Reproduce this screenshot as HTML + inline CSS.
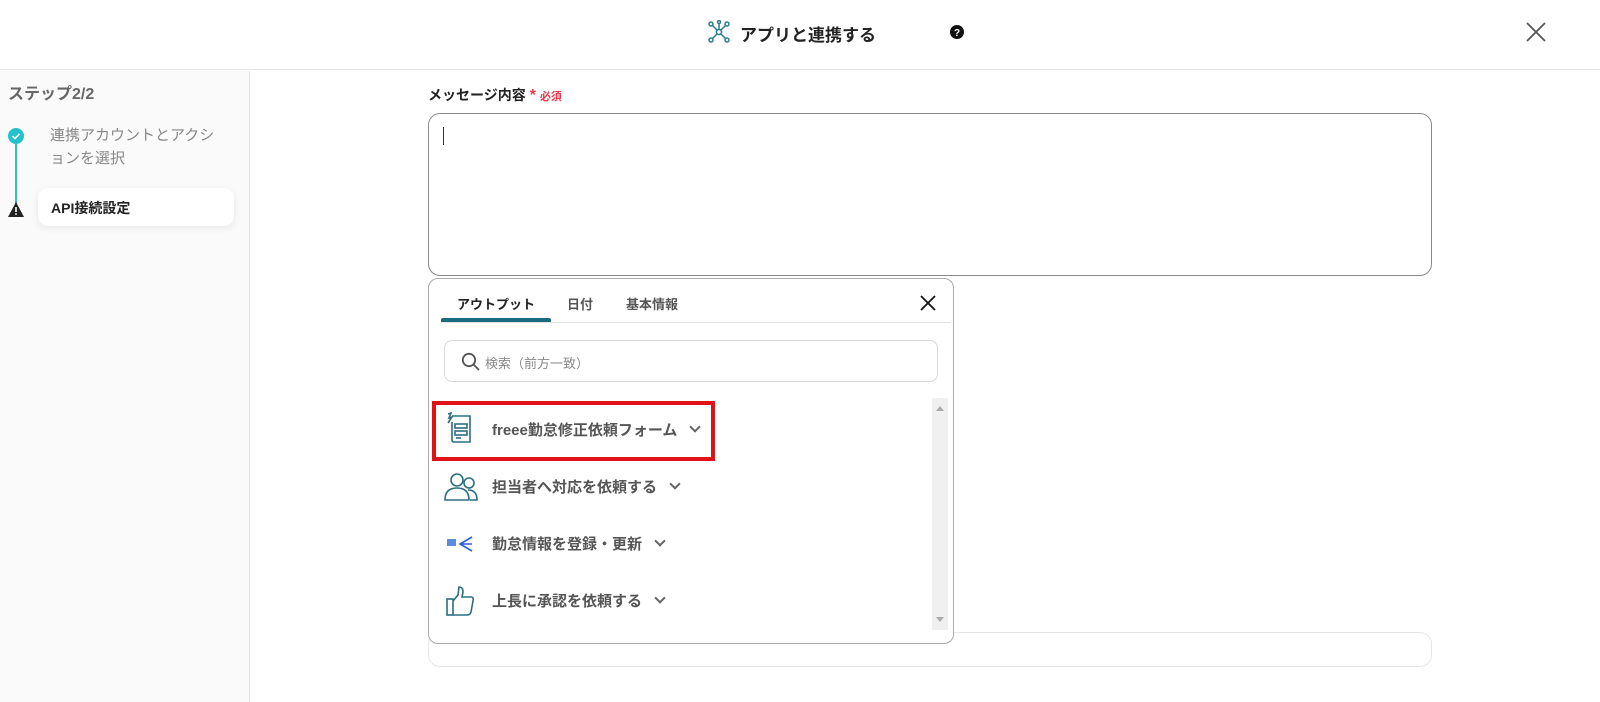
<!DOCTYPE html>
<html><head><meta charset="utf-8"><style>
*{margin:0;padding:0;box-sizing:border-box}
body{width:1600px;height:702px;overflow:hidden;background:#fff;font-family:"Liberation Sans","Noto Sans CJK JP",sans-serif;position:relative;color:#222}
.a{position:absolute}
.hdr{left:0;top:0;width:1600px;height:70px;border-bottom:1px solid #e6e6e6;background:#fff}
.side{left:0;top:71px;width:250px;height:631px;background:#fafafa;border-right:1px solid #e6e6e6}
.item{left:492px;font-size:15px;font-weight:bold;color:#555;white-space:nowrap;line-height:20px}
.chev{display:inline-block;width:8px;height:8px;border-right:2px solid #666;border-bottom:2px solid #666;transform:rotate(45deg);margin-left:14px;position:relative;top:-4px}
</style></head><body>
<div class="a hdr"></div>
<svg class="a" style="left:707px;top:20px" width="24" height="24" viewBox="0 0 24 24" fill="none" stroke="#2b7d92" stroke-width="1.5"><circle cx="12" cy="12" r="2.5"/><circle cx="4" cy="4" r="2"/><circle cx="20" cy="4" r="2"/><circle cx="4" cy="20" r="2"/><circle cx="20" cy="20" r="2"/><circle cx="12" cy="2" r="1.5"/><path d="M5.5 5.5L10 10M18.5 5.5L14 10M5.5 18.5L10 14M18.5 18.5L14 14M12 3.5V9.5"/></svg>
<div class="a" style="left:740px;top:21px;font-size:17px;font-weight:bold;color:#222">アプリと連携する</div>
<svg class="a" style="left:950px;top:25px" width="14" height="14" viewBox="0 0 14 14"><circle cx="7" cy="7" r="7" fill="#111"/><text x="7" y="11" text-anchor="middle" font-size="10" font-weight="bold" fill="#fff" font-family="Liberation Sans">?</text></svg>
<svg class="a" style="left:1526px;top:22px" width="20" height="20" viewBox="0 0 20 20" stroke="#555" stroke-width="1.8"><path d="M1 1L19 19M19 1L1 19"/></svg>

<div class="a side"></div>
<div class="a" style="left:8px;top:80px;font-size:16px;font-weight:bold;color:#666">ステップ2/2</div>
<div class="a" style="left:15px;top:144px;width:2px;height:62px;background:#2bbfc9"></div>
<svg class="a" style="left:7px;top:127px" width="18" height="18" viewBox="0 0 18 18"><circle cx="9" cy="9" r="8" fill="#22c1cc"/><path d="M5.5 9.2L8 11.5L12.5 6.8" stroke="#fff" stroke-width="1.6" fill="none"/></svg>
<div class="a" style="left:50px;top:124px;font-size:15px;color:#888;line-height:23px">連携アカウントとアクシ<br>ョンを選択</div>
<div class="a" style="left:38px;top:188px;width:196px;height:38px;background:#fff;border-radius:10px;box-shadow:0 2px 8px rgba(0,0,0,.08)"></div>
<div class="a" style="left:51px;top:198px;font-size:14px;font-weight:bold;color:#222">API接続設定</div>
<svg class="a" style="left:8px;top:202px" width="16" height="15" viewBox="0 0 16 15"><path d="M8 0L16 15H0Z" fill="#222"/><rect x="7.2" y="5" width="1.6" height="5" fill="#fff"/><rect x="7.2" y="11.3" width="1.6" height="1.6" fill="#fff"/></svg>

<div class="a" style="left:428px;top:85px;font-size:14px;font-weight:bold;color:#222">メッセージ内容<span style="color:#e83a4a;font-size:16px;margin-left:4px">*</span> <span style="color:#e83a4a;font-size:11px">必須</span></div>
<div class="a" style="left:428px;top:113px;width:1004px;height:163px;border:1px solid #8a8a8a;border-radius:12px"></div>
<div class="a" style="left:443px;top:127px;width:1px;height:18px;background:#333"></div>
<div class="a" style="left:428px;top:632px;width:1004px;height:35px;border:1px solid #e6e6e6;border-radius:12px"></div>

<div class="a" style="left:428px;top:278px;width:526px;height:366px;border:1px solid #aaa;border-radius:10px;background:#fff"></div>
<div class="a" style="left:457px;top:294px;font-size:13px;font-weight:bold;color:#222">アウトプット</div>
<div class="a" style="left:567px;top:294px;font-size:13px;font-weight:bold;color:#555">日付</div>
<div class="a" style="left:626px;top:294px;font-size:13px;font-weight:bold;color:#555">基本情報</div>
<div class="a" style="left:441px;top:322px;width:510px;height:1px;background:#e3e3e3"></div>
<div class="a" style="left:441px;top:318px;width:110px;height:4px;background:#1a6a80;border-radius:2px 2px 0 0"></div>
<svg class="a" style="left:920px;top:295px" width="16" height="16" viewBox="0 0 16 16" stroke="#111" stroke-width="1.8"><path d="M1 1L15 15M15 1L1 15"/></svg>
<div class="a" style="left:444px;top:340px;width:494px;height:42px;border:1px solid #d8d8d8;border-radius:8px"></div>
<svg class="a" style="left:461px;top:352px" width="20" height="20" viewBox="0 0 20 20" fill="none" stroke="#555" stroke-width="1.8"><circle cx="8" cy="8" r="6.2"/><path d="M12.5 12.5L18 18"/></svg>
<div class="a" style="left:485px;top:353px;font-size:13px;color:#888">検索（前方一致）</div>
<div class="a" style="left:932px;top:398px;width:16px;height:232px;background:#f0f0f0"></div>
<div class="a" style="left:936px;top:406px;border:4px solid transparent;border-bottom:5px solid #aaa;border-top:0"></div>
<div class="a" style="left:936px;top:617px;border:4px solid transparent;border-top:5px solid #aaa;border-bottom:0"></div>

<div class="a" style="left:432px;top:401px;width:283px;height:60px;border:4px solid #e01218"></div>
<svg class="a" style="left:444px;top:412px" width="30" height="32" viewBox="0 0 30 32" fill="none" stroke="#2b6e82" stroke-width="1.6"><path d="M8 4H26V30H10Q8 30 8 28V10"/><path d="M4 2L7 1L5 6L8 5L4 11"/><rect x="11" y="12" width="12" height="4"/><rect x="11" y="19" width="12" height="4"/><path d="M12 26H17"/></svg>
<div class="a item" style="top:421px">freee勤怠修正依頼フォーム<span class="chev"></span></div>
<svg class="a" style="left:444px;top:472px" width="34" height="30" viewBox="0 0 34 30" fill="none" stroke="#2b6e82" stroke-width="1.6"><circle cx="13" cy="8" r="6"/><path d="M1 28Q1 16 13 16Q25 16 25 28Z"/><circle cx="25" cy="11" r="5"/><path d="M24 18Q33 18 33 28H26"/></svg>
<div class="a item" style="top:478px">担当者へ対応を依頼する<span class="chev"></span></div>
<svg class="a" style="left:446px;top:535px" width="28" height="18" viewBox="0 0 28 18"><rect x="1" y="4" width="9" height="7" fill="#5a8de0"/><path d="M26 2L14 9L26 16M14 9H26" stroke="#2a5fd0" stroke-width="1.6" fill="none"/></svg>
<div class="a item" style="top:535px">勤怠情報を登録・更新<span class="chev"></span></div>
<svg class="a" style="left:445px;top:585px" width="30" height="32" viewBox="0 0 30 32" fill="none" stroke="#2b6e82" stroke-width="1.6"><rect x="2" y="14" width="6" height="16"/><path d="M8 16L13 10L14 2Q18 2 18 7L17 12H26Q29 12 28 16L26 27Q25 30 22 30H8"/></svg>
<div class="a item" style="top:592px">上長に承認を依頼する<span class="chev"></span></div>
</body></html>
